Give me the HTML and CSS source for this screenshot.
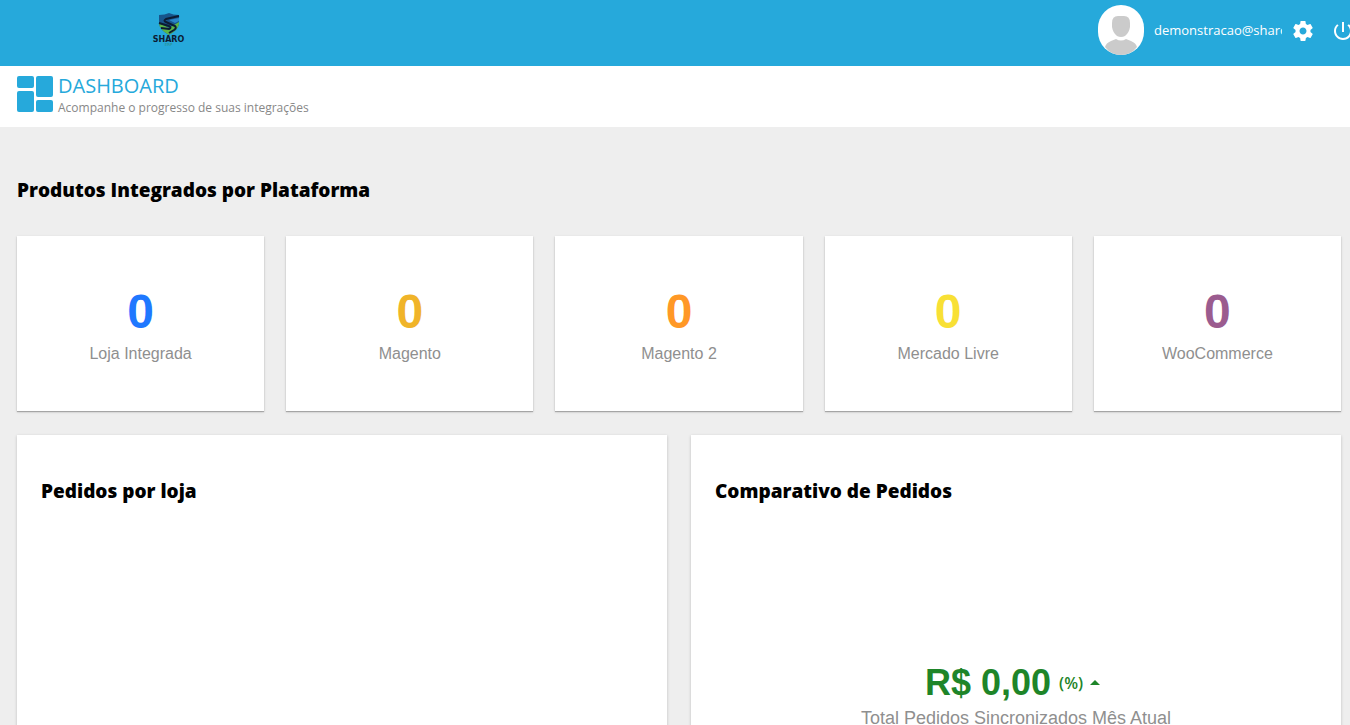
FILE: index.html
```html
<!DOCTYPE html>
<html lang="pt-BR">

<head>
    <meta charset="UTF-8">
    <meta name="viewport" content="width=device-width, initial-scale=1.0">
    <title>Sharo ERP - Dashboard</title>
    <link rel="stylesheet" href="styles.css">
</head>

<body>
    <header class="topbar">
        <a href="#" class="logo" aria-label="Sharo ERP">
            <svg width="24" height="24" viewBox="0 0 24 24">
                <path d="M2 3Q8 3 12 1Q16 3 22 3V12Q21 18 12 23Q3 18 2 12Z" fill="#17558c" />
                <path d="M2 11L12 16L22 10V12Q21 18 12 23Q3 18 2 12Z" fill="#5bb548" />
                <path d="M22 4L9 7Q6 9 9 10L18 14Q20 16 17 18L12 21" fill="none" stroke="#0c1c33" stroke-width="2" />
                <path d="M2 11L12 14Q15 16 12 17L4 16" fill="none" stroke="#0c1c33" stroke-width="2" />
                <path d="M12 8L22 6V9L18 11Z" fill="#2a86c9" />
            </svg>
            <span class="logo-name">SHARO</span>
            <span class="logo-sub">ERP</span>
        </a>
        <div class="user">
            <svg class="avatar" width="46" height="50" viewBox="0 0 46 50">
                <rect width="46" height="50" rx="23" ry="23" fill="#fff" />
                <path d="M7 42Q8 38 13 36L18 34Q23 37 28 34L33 36Q38 38 39 42Q33 50 23 50Q13 50 7 42Z" fill="#cbcbcb" />
                <path d="M14 18Q14 11 20 11H26Q32 11 32 18V22Q31 28 27 31Q23 33 19 31Q15 28 14 22Z" fill="#cbcbcb" />
            </svg>
            <span class="user-email">demonstracao@sharo.com.br</span>
            <button type="button" class="btn-icon" aria-label="Configurações">
                <svg width="24" height="24" viewBox="0 0 24 24">
                    <path fill="#fff" d="M19.43 12.98c.04-.32.07-.64.07-.98s-.03-.66-.07-.98l2.11-1.65c.19-.15.24-.42.12-.64l-2-3.46c-.12-.22-.39-.3-.61-.22l-2.49 1c-.52-.4-1.08-.73-1.69-.98l-.38-2.65C14.46 2.18 14.25 2 14 2h-4c-.25 0-.46.18-.49.42l-.38 2.65c-.61.25-1.17.59-1.69.98l-2.49-1c-.23-.09-.49 0-.61.22l-2 3.46c-.13.22-.07.49.12.64l2.11 1.65c-.04.32-.07.65-.07.98s.03.66.07.98l-2.11 1.65c-.19.15-.24.42-.12.64l2 3.46c.12.22.39.3.61.22l2.49-1c.52.4 1.08.73 1.69.98l.38 2.65c.03.24.24.42.49.42h4c.25 0 .46-.18.49-.42l.38-2.65c.61-.25 1.17-.59 1.69-.98l2.49 1c.23.09.49 0 .61-.22l2-3.46c.12-.22.07-.49-.12-.64l-2.11-1.65zM12 15.500c-1.930 0-3.500-1.570-3.500-3.500s1.570-3.500 3.500-3.500 3.500 1.570 3.500 3.500-1.570 3.500-3.500 3.500z" />
                </svg>
            </button>
            <button type="button" class="btn-icon" aria-label="Sair">
                <svg width="24" height="24" viewBox="0 0 24 24">
                    <path fill="#fff" d="M13 3h-2v10h2V3zm4.830 2.170l-1.420 1.420C17.990 7.860 19 9.810 19 12c0 3.870-3.130 7-7 7s-7-3.130-7-7c0-2.190 1.010-4.140 2.580-5.420L6.170 5.170C4.230 6.820 3 9.260 3 12c0 4.970 4.030 9 9 9s9-4.030 9-9c0-2.740-1.230-5.180-3.170-6.830z" />
                </svg>
            </button>
        </div>
    </header>

    <div class="page-head">
        <svg width="36" height="36" viewBox="0 0 36 36" fill="#26a9db">
            <rect width="17" height="12" rx="2" />
            <rect y="15" width="17" height="21" rx="2" />
            <rect x="19" width="17" height="21" rx="2" />
            <rect x="19" y="24" width="17" height="12" rx="2" />
        </svg>
        <div>
            <h1 class="page-title">DASHBOARD</h1>
            <p class="page-sub">Acompanhe o progresso de suas integrações</p>
        </div>
    </div>

    <main class="content">
        <h2 class="section-title">Produtos Integrados por Plataforma</h2>
        <div class="platforms">
            <div class="card platform loja-integrada">
                <div class="platform-total">0</div>
                <div class="platform-name">Loja Integrada</div>
            </div>
            <div class="card platform magento">
                <div class="platform-total">0</div>
                <div class="platform-name">Magento</div>
            </div>
            <div class="card platform magento2">
                <div class="platform-total">0</div>
                <div class="platform-name">Magento 2</div>
            </div>
            <div class="card platform mercado-livre">
                <div class="platform-total">0</div>
                <div class="platform-name">Mercado Livre</div>
            </div>
            <div class="card platform woocommerce">
                <div class="platform-total">0</div>
                <div class="platform-name">WooCommerce</div>
            </div>
        </div>

        <div class="panels">
            <section class="card panel">
                <h2 class="section-title">Pedidos por loja</h2>
            </section>
            <section class="card panel">
                <h2 class="section-title">Comparativo de Pedidos</h2>
                <div class="compare">
                    <div class="compare-line">
                        <span class="compare-value">R$ 0,00</span>
                        <span class="compare-percent">(%)</span>
                        <svg width="24" height="24" viewBox="0 0 24 24">
                            <path d="M7 14l5-5 5 5z" fill="#1e8529" />
                        </svg>
                    </div>
                    <div class="compare-label">Total Pedidos Sincronizados Mês Atual</div>
                </div>
            </section>
        </div>
    </main>
</body>

</html>
```

FILE: styles.css
```css
* {
    margin: 0;
    padding: 0;
    box-sizing: border-box;
}

body {
    background-color: #eee;
    font-family: 'Open Sans', sans-serif;
    overflow-x: hidden;
}

.topbar {
    display: flex;
    justify-content: space-between;
    height: 66px;
    background-color: #26a9db;
    overflow: hidden;
}

.logo {
    display: flex;
    flex-direction: column;
    align-items: center;
    width: 337px;
    padding-top: 12px;
    font-family: 'DejaVu Sans', sans-serif;
    text-decoration: none;
}

.logo-name {
    color: #0c1c33;
    font-size: 8px;
    font-weight: bold;
    line-height: 7px;
}

.logo-sub {
    color: #2b8f8a;
    font-size: 4px;
    line-height: 4px;
}

/* botão sair passa um pouco da borda direita */
.user {
    display: flex;
    align-items: center;
    height: 60px;
    margin-right: -5px;
}

.user-email {
    width: 128px;
    margin-left: 10px;
    color: #fff;
    font-size: 13px;
    overflow: hidden;
    white-space: nowrap;
}

.btn-icon {
    width: 24px;
    height: 24px;
    margin-top: 2px;
    margin-left: 9px;
    border: none;
    background: none;
    cursor: pointer;
}

.btn-icon + .btn-icon {
    margin-left: 16px;
}

.page-head {
    display: flex;
    align-items: flex-start;
    gap: 5px;
    height: 61px;
    padding: 10px 17px;
    background-color: #fff;
}

.page-title {
    color: #26a9db;
    font-size: 20px;
    font-weight: 400;
    line-height: 20px;
}

.page-sub {
    color: #888;
    font-size: 12px;
    line-height: 24px;
}

.content {
    padding: 49px 9px 24px 17px;
}

.section-title {
    color: #000;
    font-size: 19px;
    font-weight: 800;
    line-height: 28px;
}

.card {
    background-color: #fff;
    box-shadow: 0 1px 3px rgba(0, 0, 0, 0.2);
}

.platforms {
    display: grid;
    grid-template-columns: repeat(5, 1fr);
    gap: 22px;
    margin-top: 32px;
}

.platform {
    height: 175px;
    padding-top: 48px;
    font-family: 'Liberation Sans', Arial, sans-serif;
    text-align: center;
    box-shadow: 0 1px 1px rgba(0, 0, 0, 0.25), 0 1px 3px rgba(0, 0, 0, 0.12);
}

.platform-total {
    font-size: 48px;
    font-weight: bold;
    line-height: 56px;
}

.platform-name {
    color: #8f8f8f;
    font-size: 16px;
    line-height: 28px;
}

.loja-integrada .platform-total {
    color: #1f78ff;
}

.magento .platform-total {
    color: #f0b429;
}

.magento2 .platform-total {
    color: #ff9826;
}

.mercado-livre .platform-total {
    color: #f8e035;
}

.woocommerce .platform-total {
    color: #9b5c8f;
}

.panels {
    display: grid;
    grid-template-columns: 1fr 1fr;
    gap: 24px;
    margin-top: 24px;
}

.panel {
    min-height: 380px;
    padding: 42px 24px;
}

.compare {
    margin-top: 156px;
    font-family: 'Liberation Sans', Arial, sans-serif;
    text-align: center;
}

.compare-line {
    display: flex;
    align-items: center;
    justify-content: center;
    color: #1e8529;
}

.compare-value {
    font-size: 36px;
    font-weight: bold;
    line-height: 44px;
}

.compare-percent {
    margin-left: 8px;
    font-family: 'Open Sans', sans-serif;
    font-size: 16px;
    font-weight: 600;
    line-height: 20px;
}

.compare-label {
    color: #8f8f8f;
    font-size: 18px;
    line-height: 26px;
}
```
